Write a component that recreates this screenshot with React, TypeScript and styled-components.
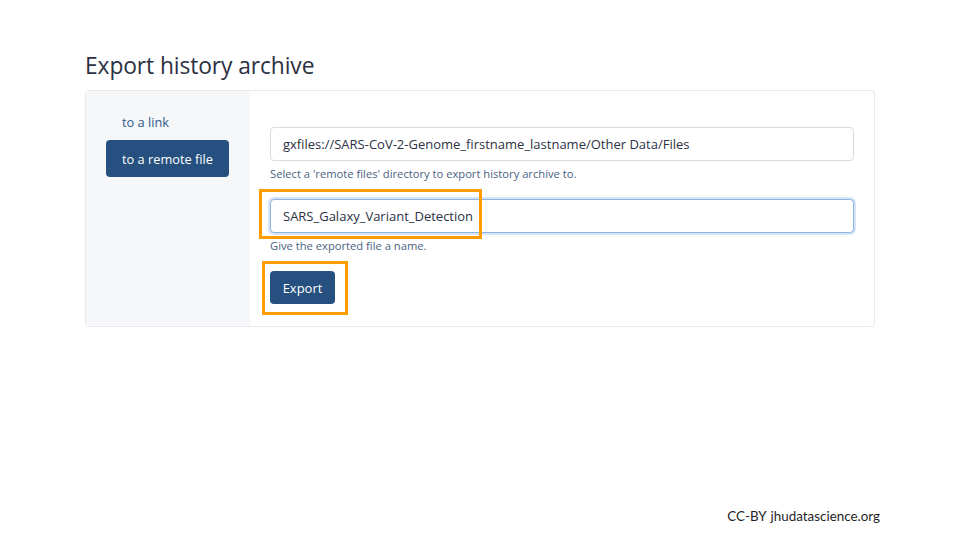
import React from "react";
import styled, { createGlobalStyle } from "styled-components";

const Global = createGlobalStyle`
  html, body { margin: 0; padding: 0; background: #ffffff; }
  body { font-family: "Open Sans", "Liberation Sans", sans-serif; }
`;

const Slide = styled.div`
  width: 960px;
  height: 540px;
  box-sizing: border-box;
  display: flex;
  flex-direction: column;
  padding: 50px 0 0 85px;
  overflow: hidden;
`;

const Title = styled.h1`
  margin: 0 0 9px 0;
  font-family: "Open Sans", "Liberation Sans", sans-serif;
  font-weight: 400;
  font-size: 22.8px;
  line-height: 31px;
  color: #2c3143;
  letter-spacing: -0.1px;
`;

const Card = styled.div`
  width: 790px;
  height: 237px;
  box-sizing: border-box;
  display: flex;
  border: 1px solid #e7e9ec;
  border-radius: 4px;
  overflow: hidden;
`;

const Sidebar = styled.div`
  width: 164px;
  flex: none;
  background: #f6f7f9;
  box-sizing: border-box;
  padding: 21px 0 0 20px;
  display: flex;
  flex-direction: column;
  align-items: flex-start;
  gap: 8px;
`;

const Tab = styled.div<{ $active?: boolean }>`
  box-sizing: border-box;
  width: 123px;
  height: ${(p) => (p.$active ? "37px" : "20px")};
  padding: 0 16px;
  display: flex;
  align-items: center;
  white-space: nowrap;
  font-size: 12.8px;
  border-radius: 4px;
  color: ${(p) => (p.$active ? "#ffffff" : "#2d5a8c")};
  background: ${(p) => (p.$active ? "#25507f" : "transparent")};
`;

const Content = styled.div`
  flex: 1;
  box-sizing: border-box;
  padding: 36px 20px 0 20px;
  display: flex;
  flex-direction: column;
  align-items: flex-start;
`;

const FieldWrap = styled.div`
  position: relative;
  width: 100%;
`;

const Input = styled.div<{ $focus?: boolean }>`
  box-sizing: border-box;
  width: 100%;
  height: 34px;
  display: flex;
  align-items: center;
  padding: 0 12px;
  font-size: 13px;
  color: #2c3143;
  background: #ffffff;
  border-radius: 4px;
  border: 1px solid ${(p) => (p.$focus ? "#8db3e2" : "#dcdcd2")};
  box-shadow: ${(p) => (p.$focus ? "0 0 0 2px rgba(141, 179, 226, 0.35)" : "none")};
`;

const Help = styled.div`
  font-size: 11.2px;
  line-height: 14px;
  margin: 6px 0 18px 0;
  color: #4a6282;
`;

const Button = styled.div`
  box-sizing: border-box;
  width: 65px;
  height: 33px;
  border-radius: 4px;
  background: #25507f;
  color: #ffffff;
  font-size: 13px;
  display: flex;
  align-items: center;
  justify-content: center;
`;

const Highlight = styled.div<{ $l: number; $t: number; $w: number; $h: number }>`
  position: absolute;
  left: ${(p) => p.$l}px;
  top: ${(p) => p.$t}px;
  width: ${(p) => p.$w}px;
  height: ${(p) => p.$h}px;
  box-sizing: border-box;
  border: 3px solid #ff9d00;
  pointer-events: none;
`;

const Footer = styled.div`
  margin-top: auto;
  align-self: flex-end;
  padding: 0 80px 16px 0;
  font-family: Lato, "Liberation Sans", sans-serif;
  font-size: 13.4px;
  color: #1f1f1f;
  word-spacing: 1px;
`;

export default function App() {
  return (
    <>
      <Global />
      <Slide>
        <Title>Export history archive</Title>
        <Card>
          <Sidebar>
            <Tab>to a link</Tab>
            <Tab $active>to a remote file</Tab>
          </Sidebar>
          <Content>
            <FieldWrap>
              <Input>gxfiles://SARS-CoV-2-Genome_firstname_lastname/Other Data/Files</Input>
            </FieldWrap>
            <Help>Select a 'remote files' directory to export history archive to.</Help>
            <FieldWrap>
              <Input $focus>SARS_Galaxy_Variant_Detection</Input>
              <Highlight $l={-11} $t={-10} $w={223} $h={50} />
            </FieldWrap>
            <Help>Give the exported file a name.</Help>
            <FieldWrap>
              <Button>Export</Button>
              <Highlight $l={-8} $t={-10} $w={86} $h={54} />
            </FieldWrap>
          </Content>
        </Card>
        <Footer>CC-BY jhudatascience.org</Footer>
      </Slide>
    </>
  );
}
